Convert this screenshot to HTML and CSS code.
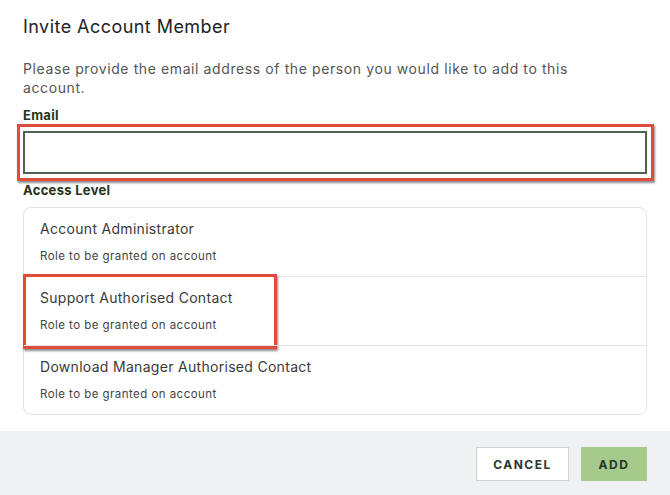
FILE: index.html
```html
<!DOCTYPE html>
<html lang="en">
<head>
<meta charset="utf-8">
<title>Invite Account Member</title>
<link rel="stylesheet" href="styles.css">
</head>
<body>
<div class="dialog">
  <div class="content">
    <h1 class="title">Invite Account Member</h1>
    <p class="desc">Please provide the email address of the person you would like to add to this account.</p>
    <label class="label" for="email">Email</label>
    <div class="field highlight">
      <input class="input" id="email" type="email">
    </div>
    <div class="label label-access">Access Level</div>
    <div class="roles">
      <div class="role">
        <div class="role-name">Account Administrator</div>
        <div class="role-desc">Role to be granted on account</div>
      </div>
      <div class="role role-marked">
        <div class="role-name">Support Authorised Contact</div>
        <div class="role-desc">Role to be granted on account</div>
      </div>
      <div class="role">
        <div class="role-name">Download Manager Authorised Contact</div>
        <div class="role-desc">Role to be granted on account</div>
      </div>
    </div>
  </div>
  <div class="footer">
    <button class="btn btn-cancel">CANCEL</button>
    <button class="btn btn-add">ADD</button>
  </div>
</div>
</body>
</html>
```
FILE: styles.css
```css
* { box-sizing: border-box; }
html, body { margin: 0; padding: 0; background: #fff; }
body {
  font-family: Inter, "Noto Sans", "Liberation Sans", sans-serif;
  color: #2b2b2b;
  width: 670px;
  height: 495px;
  overflow: hidden;
}
.dialog { display: flex; flex-direction: column; height: 495px; }
.content { padding: 15px 23px 0 23px; flex: 1; }
.title {
  margin: 0;
  font-size: 18px;
  line-height: 24px;
  font-weight: 400;
  letter-spacing: 0.45px;
  color: #222;
}
.desc {
  margin: 20px 0 0 0;
  font-size: 14px;
  line-height: 19px;
  letter-spacing: 0.6px;
  color: #555;
  width: 590px;
}
.label {
  display: block;
  margin-top: 9px;
  font-size: 13px;
  line-height: 18px;
  font-weight: 700;
  letter-spacing: 0.3px;
  color: #1f3322;
}
.label-access { margin-top: 7px; }
.field { position: relative; margin-top: 7px; }
.input {
  display: block;
  width: 624px;
  height: 43px;
  border: 2px solid #4d6450;
  background: #fff;
  margin: 0;
  padding: 0 10px;
  font: inherit;
  outline: none;
}
.highlight::after {
  content: "";
  position: absolute;
  left: -6px;
  top: -7px;
  right: -7px;
  bottom: -7px;
  border: 3px solid #e04b3a;
  box-shadow: 1px 2px 2px rgba(0,0,0,0.45);
  pointer-events: none;
}
.roles {
  margin-top: 8px;
  width: 624px;
  border: 1px solid #e3e3e3;
  border-radius: 8px;
}
.role {
  position: relative;
  height: 69px;
  padding: 12px 16px 0 16px;
  border-top: 1px solid #e6e6e6;
}
.role:first-child { border-top: none; height: 68px; }
.role-name {
  font-size: 14px;
  line-height: 18px;
  letter-spacing: 0.3px;
  color: #3a3a3a;
}
.role-desc {
  margin-top: 10px;
  font-size: 11.5px;
  line-height: 16px;
  letter-spacing: 0.45px;
  color: #444;
}
.role-marked::after {
  content: "";
  position: absolute;
  left: -1px;
  top: -3px;
  width: 248px;
  height: 69px;
  border: 3px solid #e04b3a;
  box-shadow: 1px 2px 2px rgba(0,0,0,0.45);
  pointer-events: none;
}
.footer {
  height: 64px;
  background: #f0f1f3;
  display: flex;
  justify-content: flex-end;
  align-items: flex-start;
  gap: 12px;
  padding: 16px 23px 0 0;
}
.btn {
  height: 34px;
  font-family: Inter, "Liberation Sans", sans-serif;
  font-size: 12px;
  font-weight: 700;
  letter-spacing: 1.5px;
  color: #2c3530;
  cursor: pointer;
}
.btn-cancel {
  width: 93px;
  background: #fff;
  border: 1px solid #cfd1d4;
}
.btn-add {
  width: 66px;
  background: #a6c98c;
  border: none;
  color: #253525;
}
```
